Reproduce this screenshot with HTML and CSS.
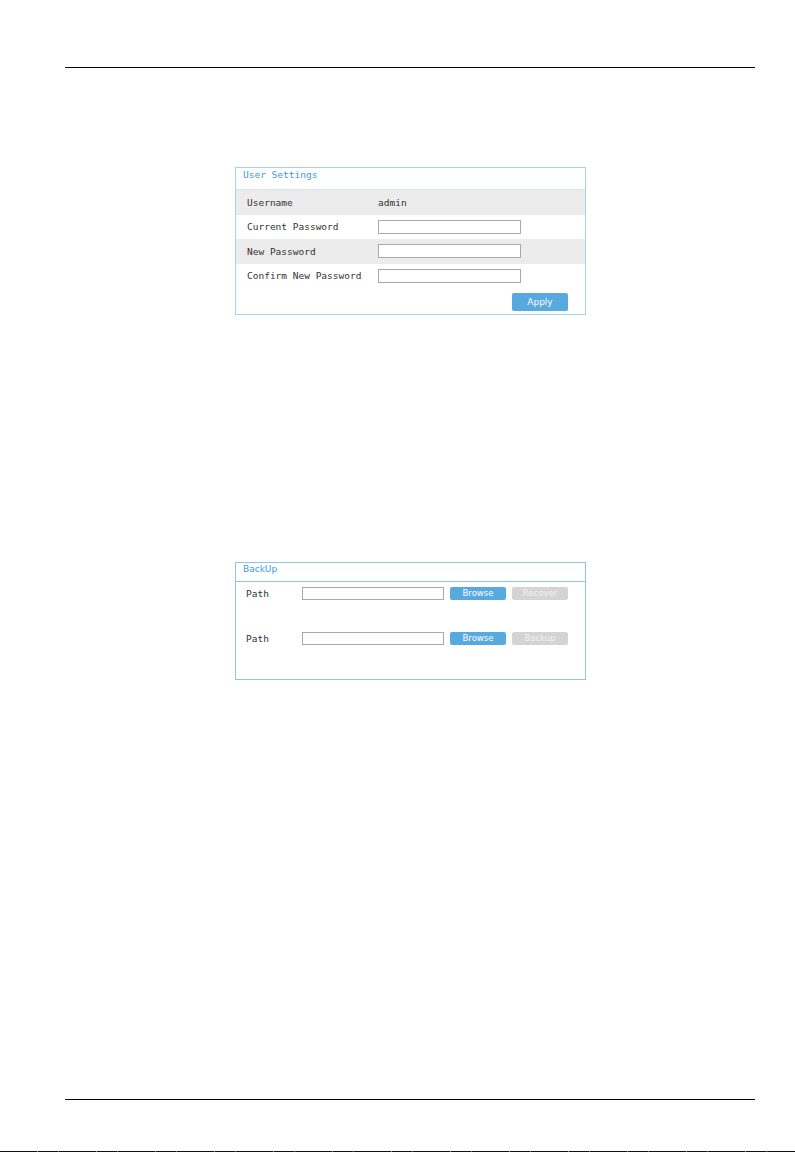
FILE: index.html
```html
<!DOCTYPE html>
<html lang="en">
<head>
    <meta charset="UTF-8">
    <meta name="viewport" content="width=device-width, initial-scale=1.0">
    <title>User Settings</title>
    <link rel="stylesheet" href="styles.css">
</head>
<body>
    <div class="page">
        <div class="rule rule-top"></div>

        <div class="panel user-panel">
            <div class="panel-title mono">User Settings</div>
            <div class="settings">
                <div class="row shaded">
                    <span class="label">Username</span>
                    <span class="value">admin</span>
                </div>
                <div class="row">
                    <span class="label">Current Password</span>
                    <input class="field" type="password">
                </div>
                <div class="row shaded">
                    <span class="label">New Password</span>
                    <input class="field" type="password">
                </div>
                <div class="row">
                    <span class="label">Confirm New Password</span>
                    <input class="field" type="password">
                </div>
            </div>
            <div class="actions">
                <button class="btn btn-apply">Apply</button>
            </div>
        </div>

        <div class="panel backup-panel">
            <div class="panel-title sans">BackUp</div>
            <div class="backup">
                <div class="path-row">
                    <span class="label">Path</span>
                    <input class="path-field" type="text">
                    <button class="btn btn-small">Browse</button>
                    <button class="btn btn-small disabled">Recover</button>
                </div>
                <div class="path-row">
                    <span class="label">Path</span>
                    <input class="path-field" type="text">
                    <button class="btn btn-small">Browse</button>
                    <button class="btn btn-small disabled">Backup</button>
                </div>
            </div>
        </div>

        <div class="rule rule-bottom"></div>
        <div class="edge"></div>
    </div>
</body>
</html>
```

FILE: styles.css
```css
* {
    margin: 0;
    padding: 0;
    box-sizing: border-box;
}

body {
    background: #fff;
    font-family: "DejaVu Sans Mono", "Liberation Mono", monospace;
    font-size: 9.5px;
    color: #333;
}

.page {
    display: flex;
    flex-direction: column;
    height: 1152px;
    overflow: hidden;
}

.rule {
    height: 1px;
    background: #000;
    margin-left: 65px;
    width: 690px;
}

.rule-top {
    margin-top: 67px;
}

.rule-bottom {
    margin-top: 419px;
}

/* dotted scan edge at the very bottom */
.edge {
    margin-top: 51px;
    height: 1px;
    background: repeating-linear-gradient(90deg, #111 0 37px, #6a8fd0 37px 38px, #111 38px 58px, #c05070 58px 59px);
}

.panel {
    width: 351px;
    margin-left: 235px;
    border: 1px solid #a4d2f0;
}

.user-panel {
    margin-top: 99px;
}

.backup-panel {
    margin-top: 247px;
    border-color: #8ec4e4;
}

.panel-title {
    color: #3a9ae8;
    padding-left: 7px;
}

.panel-title.mono {
    height: 22px;
    line-height: 14px;
    border-bottom: 1px solid #d3e5f1;
}

.panel-title.sans {
    height: 19px;
    line-height: 12px;
    font-family: "DejaVu Sans", Verdana, sans-serif;
    font-size: 9px;
    border-bottom: 1px solid #8ec4e4;
}

.settings {
    display: flex;
    flex-direction: column;
}

.row {
    display: flex;
    align-items: center;
    height: 24.5px;
    padding-left: 11px;
}

.row.shaded {
    background: #ececec;
}

.row .label {
    width: 131px;
}

.field {
    width: 143px;
    height: 14px;
    border: 1px solid #a9a9a9;
    background: #fff;
}

.actions {
    display: flex;
    justify-content: flex-end;
    padding: 5px 17px 3px 0;
}

.btn {
    border: none;
    border-radius: 2px;
    background: #57a9df;
    color: #fff;
    font-family: "DejaVu Sans", Verdana, sans-serif;
}

.btn-apply {
    width: 56px;
    height: 18px;
    font-size: 9px;
}

.backup {
    display: flex;
    flex-direction: column;
    gap: 32px;
    padding: 5px 0 34px 10px;
}

.path-row {
    display: flex;
    align-items: center;
    gap: 6px;
    height: 13px;
}

.path-row .label {
    width: 50px;
}

.path-field {
    width: 142px;
    height: 13px;
    border: 1px solid #a9a9a9;
    background: #fff;
}

.btn-small {
    width: 56px;
    height: 13px;
    font-size: 8.5px;
    line-height: 13px;
}

.btn-small.disabled {
    background: #d4d4d4;
    color: #f2f2f2;
}
```
